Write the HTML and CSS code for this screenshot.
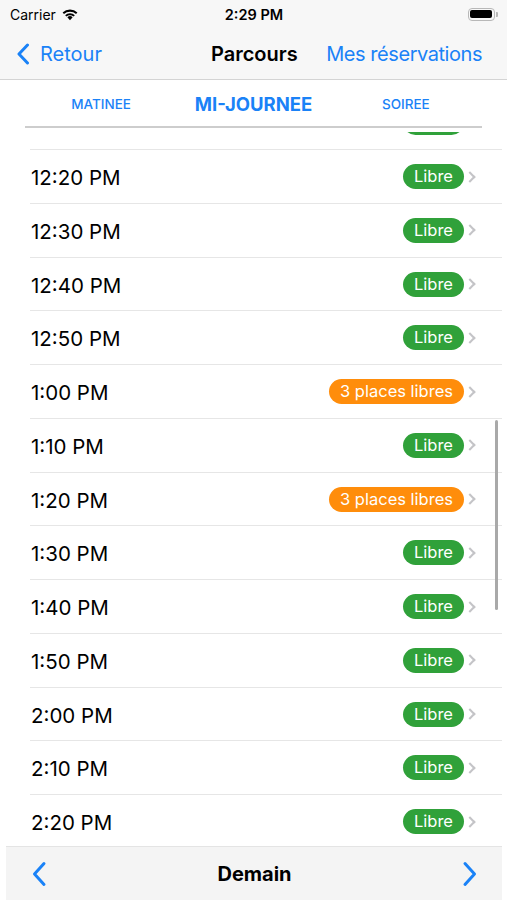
FILE: index.html
```html
<!DOCTYPE html>
<html lang="fr">
<head>
    <meta charset="UTF-8">
    <meta name="viewport" content="width=device-width, initial-scale=1.0">
    <title>Parcours</title>
    <link rel="stylesheet" href="styles.css">
</head>
<body>
    <div class="screen">
        <div class="statusbar">
            <div class="carrier">
                Carrier
                <svg width="18" height="13" viewBox="0 0 17 12">
                    <path d="M8.5 11.5 L6 8.6 A3.6 3.6 0 0 1 11 8.6 Z" fill="#000"/>
                    <path d="M3.9 6.6 A6.6 6.6 0 0 1 13.1 6.6 L11.8 8 A4.8 4.8 0 0 0 5.2 8 Z" fill="#000"/>
                    <path d="M1.5 4.2 A10 10 0 0 1 15.5 4.2 L14.2 5.6 A8.2 8.2 0 0 0 2.8 5.6 Z" fill="#000"/>
                </svg>
            </div>
            <div class="clock">2:29 PM</div>
            <div class="battery">
                <span class="battery-body"><span class="battery-level"></span></span>
                <span class="battery-tip"></span>
            </div>
        </div>

        <div class="navbar">
            <div class="nav-back">
                <svg width="14" height="22" viewBox="0 0 14 22">
                    <path d="M11.5 2 L3 11 L11.5 20" fill="none" stroke="#1a82f7" stroke-width="3" stroke-linecap="round" stroke-linejoin="round"/>
                </svg>
                <span>Retour</span>
            </div>
            <div class="nav-title">Parcours</div>
            <div class="nav-right">Mes réservations</div>
        </div>

        <div class="segments">
            <div class="segment-tabs">
                <span class="tab">MATINEE</span>
                <span class="tab active">MI-JOURNEE</span>
                <span class="tab">SOIREE</span>
            </div>
            <div class="segment-line"></div>
        </div>

        <div class="list-wrap">
            <ul class="slots">
                <!-- row scrolled mostly out of view under the tabs -->
                <li class="slot"><span class="time"></span><span class="badge free"></span><span class="chev"></span></li>
                <li class="slot"><span class="time">12:20 PM</span><span class="badge free">Libre</span><span class="chev"></span></li>
                <li class="slot"><span class="time">12:30 PM</span><span class="badge free">Libre</span><span class="chev"></span></li>
                <li class="slot"><span class="time">12:40 PM</span><span class="badge free">Libre</span><span class="chev"></span></li>
                <li class="slot"><span class="time">12:50 PM</span><span class="badge free">Libre</span><span class="chev"></span></li>
                <li class="slot"><span class="time">1:00 PM</span><span class="badge few">3 places libres</span><span class="chev"></span></li>
                <li class="slot"><span class="time">1:10 PM</span><span class="badge free">Libre</span><span class="chev"></span></li>
                <li class="slot"><span class="time">1:20 PM</span><span class="badge few">3 places libres</span><span class="chev"></span></li>
                <li class="slot"><span class="time">1:30 PM</span><span class="badge free">Libre</span><span class="chev"></span></li>
                <li class="slot"><span class="time">1:40 PM</span><span class="badge free">Libre</span><span class="chev"></span></li>
                <li class="slot"><span class="time">1:50 PM</span><span class="badge free">Libre</span><span class="chev"></span></li>
                <li class="slot"><span class="time">2:00 PM</span><span class="badge free">Libre</span><span class="chev"></span></li>
                <li class="slot"><span class="time">2:10 PM</span><span class="badge free">Libre</span><span class="chev"></span></li>
                <li class="slot"><span class="time">2:20 PM</span><span class="badge free">Libre</span><span class="chev"></span></li>
            </ul>
            <div class="scroll-indicator"></div>
        </div>

        <div class="toolbar">
            <svg width="16" height="26" viewBox="0 0 16 26">
                <path d="M13 2.5 L3.5 13 L13 23.5" fill="none" stroke="#1a82f7" stroke-width="3" stroke-linecap="round" stroke-linejoin="round"/>
            </svg>
            <span class="toolbar-title">Demain</span>
            <svg width="16" height="26" viewBox="0 0 16 26">
                <path d="M3 2.5 L12.5 13 L3 23.5" fill="none" stroke="#1a82f7" stroke-width="3" stroke-linecap="round" stroke-linejoin="round"/>
            </svg>
        </div>
    </div>
</body>
</html>
```

FILE: styles.css
```css
* {
    box-sizing: border-box;
}

body {
    margin: 0;
    font-family: Inter, "Liberation Sans", Arial, sans-serif;
    background: #fff;
    color: #000;
}

.screen {
    width: 507px;
    height: 900px;
    display: flex;
    flex-direction: column;
    overflow: hidden;
}

/* status bar */
.statusbar {
    height: 28px;
    flex-shrink: 0;
    background: #f7f7f7;
    display: flex;
    align-items: center;
    justify-content: space-between;
    padding: 0 9px 0 10px;
    font-size: 14px;
}

.carrier {
    display: flex;
    align-items: center;
    gap: 5px;
    width: 120px;
}

.clock {
    font-weight: 600;
    font-size: 14.5px;
}

.battery {
    width: 120px;
    display: flex;
    justify-content: flex-end;
    align-items: center;
}

.battery-body {
    width: 27px;
    height: 13px;
    border: 1px solid #b8b8b8;
    border-radius: 4px;
    padding: 1.5px;
    display: flex;
}

.battery-level {
    flex: 1;
    background: #000;
    border-radius: 2px;
}

.battery-tip {
    width: 2px;
    height: 5px;
    background: #b8b8b8;
    border-radius: 0 1px 1px 0;
    margin-left: 1px;
}

/* navigation bar */
.navbar {
    height: 52px;
    flex-shrink: 0;
    background: #f7f7f7;
    border-bottom: 1px solid #d4d4d4;
    display: flex;
    align-items: center;
    padding: 0 25px 0 16px;
    font-size: 20px;
    white-space: nowrap;
}

.nav-back {
    display: flex;
    align-items: center;
    gap: 10px;
    color: #1a82f7;
    width: 195px;
}

.nav-title {
    font-weight: 600;
}

.nav-right {
    color: #1a82f7;
    margin-left: auto;
    letter-spacing: -0.45px;
}

/* segment tabs */
.segments {
    height: 52px;
    flex-shrink: 0;
    padding: 0 25px 4px;
    display: flex;
    flex-direction: column;
}

.segment-tabs {
    flex: 1;
    display: grid;
    grid-template-columns: 1fr 1fr 1fr;
    align-items: center;
    justify-items: center;
    padding-top: 1px;
}

.tab {
    color: #1a82f7;
    font-size: 13.5px;
    font-weight: 500;
}

.tab.active {
    font-size: 18.5px;
    font-weight: 700;
}

.segment-line {
    height: 2px;
    background: #cdcdcd;
}

/* list */
.list-wrap {
    flex: 1;
    overflow: hidden;
    position: relative;
    padding: 0 5px 0 6px;
}

.slots {
    list-style: none;
    margin: -35.6px 0 0 0;
    padding: 0;
}

.slot {
    height: 53.75px;
    display: flex;
    align-items: center;
    margin-left: 24px;
    padding-right: 28px;
    border-bottom: 1px solid #e6e6e6;
}

.time {
    flex: 1;
    font-size: 20.5px;
    padding-left: 1px;
    padding-top: 2px;
}

.badge {
    color: #fff;
    font-size: 16.5px;
    min-width: 61px;
    height: 25px;
    line-height: 25px;
    border-radius: 12.5px;
    padding: 0 11px;
}

.badge.free {
    background: #30a13a;
}

.badge.few {
    background: #ff8d0b;
}

.chev {
    width: 8px;
    height: 8px;
    border-top: 2px solid #c4c4c7;
    border-right: 2px solid #c4c4c7;
    transform: rotate(45deg);
    margin-left: 2px;
}

.scroll-indicator {
    position: absolute;
    right: 9px;
    top: 288px;
    width: 3px;
    height: 190px;
    border-radius: 2px;
    background: #a9a9a9;
}

/* bottom toolbar */
.toolbar {
    height: 54px;
    flex-shrink: 0;
    margin: 0 5px 0 6px;
    background: #f4f4f4;
    border-top: 1px solid #e4e4e4;
    display: flex;
    align-items: center;
    justify-content: space-between;
    padding: 0 24px 0 25px;
}

.toolbar-title {
    font-size: 20px;
    font-weight: 700;
}
```
